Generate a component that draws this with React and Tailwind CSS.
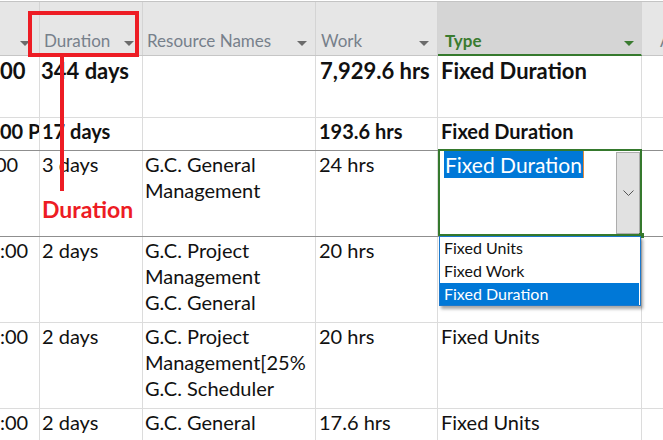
import React from "react";

const cols = "grid grid-cols-[40px_103px_173px_122px_204px_1fr]";
const line = "border-r border-[#dcdcdc]";

const Arrow = ({ color = "#6b6b6b" }) => (
  <svg width="10" height="5" viewBox="0 0 10 5" className="mb-[5px] shrink-0">
    <polygon points="0,0 10,0 5,5" fill={color} />
  </svg>
);

const HeaderCell = ({ label, pl = "pl-[4px]" }) => (
  <div className={`flex items-end justify-between border-r border-[#d4d4d4] ${pl} pr-[8px] pb-[4px]`}>
    <span className="text-[17px] leading-[20px] text-[#77808b] whitespace-nowrap">{label}</span>
    <Arrow />
  </div>
);

// rows below the two summary rows
const rows = [
  { start: ":00", dur: "2 days", res: ["G.C. Project", "Management", "G.C. General"], work: "20 hrs", type: null },
  { start: ":00", dur: "2 days", res: ["G.C. Project", "Management[25%", "G.C. Scheduler"], work: "20 hrs", type: "Fixed Units" },
];

const Dropdown = () => (
  <>
    {/* edit box */}
    <div className="absolute -top-[2px] left-0 w-[204px] h-[87px] border-2 border-[#35792d] bg-white z-10">
      <div className="absolute top-0 left-[4px] h-[27px] bg-[#0078d7] border-r border-[#e28a3c] pl-[1px] pr-[1px] text-[21px] leading-[27px] text-white whitespace-nowrap">
        Fixed Duration
      </div>
      <div className="absolute top-[1px] left-[176px] w-[24px] h-[82px] bg-[#e1e1e1] border border-[#adadad] flex items-center justify-center">
        <svg width="11" height="6" viewBox="0 0 11 6">
          <polyline points="0.5,0.5 5.5,5.5 10.5,0.5" fill="none" stroke="#555" strokeWidth="1" />
        </svg>
      </div>
      <div className="absolute -right-[4px] -bottom-[4px] w-[5px] h-[5px] bg-[#35792d]" />
    </div>
    {/* list */}
    <div className="absolute top-[85px] left-[1px] w-[202px] h-[70px] bg-white border border-[#1b78cc] shadow-[2px_3px_3px_rgba(0,0,0,0.35)] z-20 text-[16px] text-[#111]">
      <div className="h-[23px] leading-[21px] pl-[4px]">Fixed Units</div>
      <div className="h-[23px] leading-[21px] pl-[4px]">Fixed Work</div>
      <div className="h-[22px] leading-[22px] pl-[4px] mr-[1px] bg-[#0078d7] text-white">Fixed Duration</div>
    </div>
  </>
);

export default function App() {
  return (
    <div className="relative w-[663px] h-[440px] overflow-hidden bg-white font-['Lato',sans-serif] text-[#111]">
      {/* Header */}
      <div className={`${cols} h-[55px] mt-px border-t border-b border-t-[#c4c4c4] border-b-[#c6c6c6] bg-[#e6e6e6]`}>
        <div className="flex items-end justify-end border-r border-[#d4d4d4] pr-[9px] pb-[4px]">
          <Arrow />
        </div>
        <HeaderCell label="Duration" />
        <HeaderCell label="Resource Names" />
        <HeaderCell label="Work" pl="pl-[5px]" />
        <div className="flex items-end justify-between bg-[#d5d5d5] border-r border-[#d4d4d4] border-b-2 border-b-[#35792d] -mb-px pl-[7px] pr-[7px] pb-[3px]">
          <span className="text-[17px] leading-[20px] font-bold text-[#3a7b30]">Type</span>
          <Arrow color="#3a7b30" />
        </div>
        <div className="overflow-hidden pb-[4px] flex items-end">
          <span className="ml-[18px] text-[17px] leading-[20px] text-[#77808b] whitespace-nowrap">Add New Column</span>
        </div>
      </div>

      {/* Summary row */}
      <div className={`${cols} h-[62px] border-b border-[#dcdcdc] text-[22px] leading-[26px] font-bold`}>
        <div className={`${line} overflow-hidden pt-[2px] whitespace-nowrap`}>00</div>
        <div className={`${line} pl-[1px] pt-[2px]`}>344 days</div>
        <div className={line} />
        <div className={`${line} pl-[4px] pt-[2px] whitespace-nowrap`}>7,929.6 hrs</div>
        <div className={`${line} pl-[3px] pt-[2px] whitespace-nowrap`}>Fixed Duration</div>
        <div />
      </div>

      {/* Phase row */}
      <div className={`${cols} h-[33px] border-b border-[#8f8f8f] text-[20px] leading-[26px] font-bold`}>
        <div className={`${line} overflow-hidden whitespace-nowrap`}>00 PM</div>
        <div className={`${line} pl-[2px]`}>17 days</div>
        <div className={line} />
        <div className={`${line} pl-[3px] whitespace-nowrap`}>193.6 hrs</div>
        <div className={`${line} pl-[3px] whitespace-nowrap`}>Fixed Duration</div>
        <div />
      </div>

      {/* Selected task row */}
      <div className={`${cols} h-[86px] border-b border-[#8f8f8f] text-[20px] leading-[26px]`}>
        <div className={`${line} overflow-hidden whitespace-nowrap`}>
          <span className="-ml-[5px]">00</span>
        </div>
        <div className={`${line} pl-[2px]`}>3 days</div>
        <div className={`${line} pl-[2px]`}>
          <div>G.C. General</div>
          <div>Management</div>
        </div>
        <div className={`${line} pl-[3px]`}>24 hrs</div>
        <div className={`${line} relative`}>
          <Dropdown />
        </div>
        <div />
      </div>

      {rows.map((r, i) => (
        <div key={i} className={`${cols} h-[86px] border-b border-[#dcdcdc] text-[20px] leading-[26px]`}>
          <div className={`${line} overflow-hidden whitespace-nowrap`}>{r.start}</div>
          <div className={`${line} pl-[2px]`}>{r.dur}</div>
          <div className={`${line} pl-[2px] overflow-hidden`}>
            {r.res.map((t) => (
              <div key={t} className="whitespace-nowrap">{t}</div>
            ))}
          </div>
          <div className={`${line} pl-[3px]`}>{r.work}</div>
          <div className={`${line} pl-[3px] whitespace-nowrap`}>{r.type}</div>
          <div />
        </div>
      ))}

      <div className={`${cols} h-[40px] text-[20px] leading-[26px]`}>
        <div className={`${line} overflow-hidden whitespace-nowrap`}>:00</div>
        <div className={`${line} pl-[2px]`}>2 days</div>
        <div className={`${line} pl-[2px] whitespace-nowrap`}>G.C. General</div>
        <div className={`${line} pl-[3px]`}>17.6 hrs</div>
        <div className={`${line} pl-[3px] whitespace-nowrap`}>Fixed Units</div>
        <div />
      </div>

      {/* Red annotation */}
      <div className="absolute left-[28px] top-[11px] w-[111px] h-[46px] border-4 border-[#ed1c24] z-30" />
      <div className="absolute left-[60px] top-[57px] w-[4px] h-[134px] bg-[#ed1c24] z-30" />
      <div className="absolute left-[42px] top-[198px] text-[23px] leading-[23px] font-bold text-[#ed1c24] z-30">
        Duration
      </div>
    </div>
  );
}
